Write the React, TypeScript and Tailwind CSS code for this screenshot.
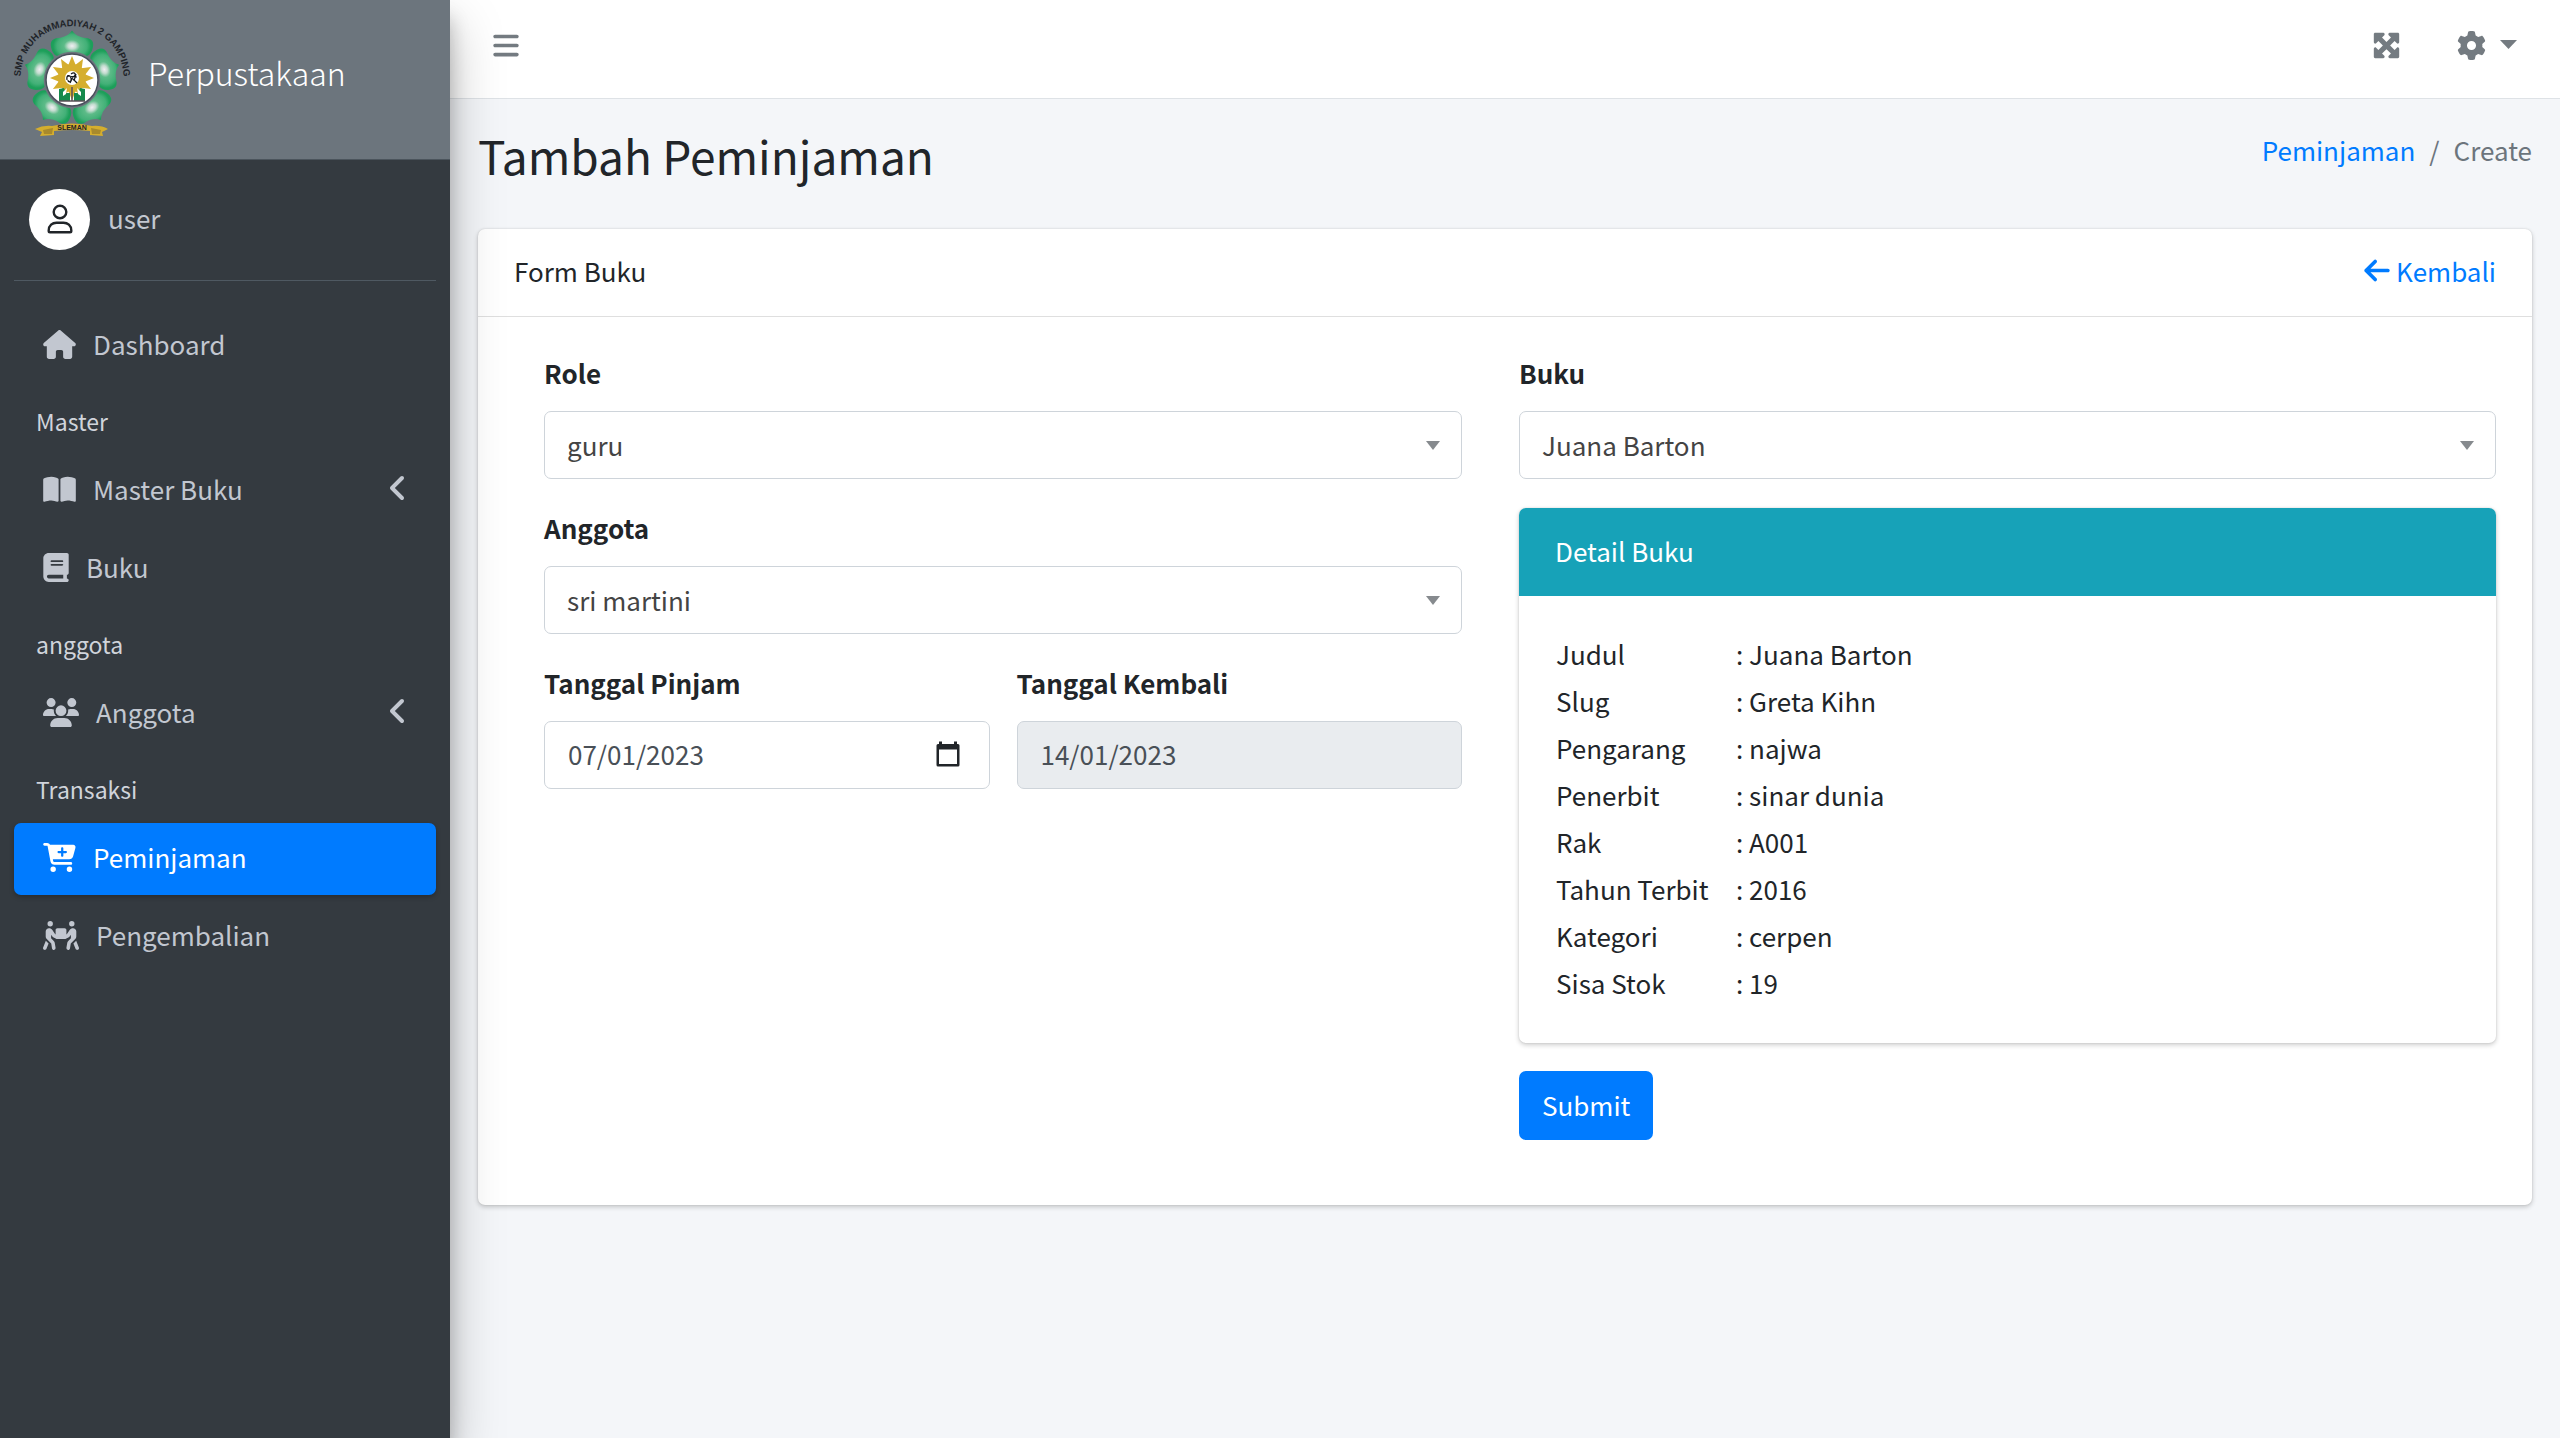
import type { ReactNode } from "react";
import {
  FaAngleLeft,
  FaArrowLeft,
  FaBars,
  FaBook,
  FaBookOpen,
  FaCartPlus,
  FaGear,
  FaHouse,
  FaMaximize,
  FaPeopleCarryBox,
  FaUsers,
} from "react-icons/fa6";

const PETAL_ANGLES = [0, 72, 144, 216, 288];
const RAY_ANGLES = [0, 30, 60, 90, 120, 150, 180, 210, 240, 270, 300, 330];

function SchoolLogo() {
  return (
    <svg viewBox="0 0 118 120" className="h-[120px] w-[118px] shrink-0 overflow-visible" role="img" aria-label="SMP Muhammadiyah 2 Gamping">
      <defs>
        <radialGradient id="petal" gradientUnits="userSpaceOnUse" cx="0" cy="-34" r="20" gradientTransform="translate(0 -8.5) scale(1 0.75)">
          <stop offset="0" stopColor="#f1eff3" />
          <stop offset="0.2" stopColor="#c3dccf" />
          <stop offset="0.4" stopColor="#5dbb88" />
          <stop offset="0.75" stopColor="#42b077" />
          <stop offset="0.95" stopColor="#1d9f5a" />
        </radialGradient>
        <path id="arc" d="M9 72 A51.500 51.500 0 1 1 109 72" />
      </defs>
      <text fontFamily="Liberation Sans, Arial, sans-serif" fontWeight="700" fontSize="9.500" fill="#1f2429" textAnchor="middle">
        <textPath href="#arc" startOffset="50%">
          SMP MUHAMMADIYAH 2 GAMPING
        </textPath>
      </text>
      <g transform="translate(59 62)">
        {PETAL_ANGLES.map((a) => (
          <path
            key={a}
            transform={`rotate(${a})`}
            d="M0 -49.500 C3 -45 8 -42.500 14 -42 C20 -41.500 22 -38 21 -33 C20 -28 18 -25 15 -24 A29 29 0 0 0 -15 -24 C-18 -25 -20 -28 -21 -33 C-22 -38 -20 -41.500 -14 -42 C-8 -42.500 -3 -45 0 -49.500Z"
            fill="url(#petal)"
          />
        ))}
        <circle r="26" fill="#fff" stroke="#4a4f5c" strokeWidth="1.500" />
        {RAY_ANGLES.map((a) => (
          <path key={a} transform={`translate(0 -2) rotate(${a})`} d="M0 -22 L4.500 -11 L-4.500 -11Z" fill="#d5ae2e" />
        ))}
        <circle cy="-2" r="14" fill="#d5ae2e" />
        <circle cy="-2" r="7" fill="#fff" />
        <path d="M-5 0 C-6 -5 -2 -6 -1 -2 C0 2 -4 3 -4 0 M-1 -6 C3 -9 5 -5 1 -3 L-2 3 M1 -1 L5 3 M4 -6 L2 1 M-5 -4 L5 -3" fill="none" stroke="#15181c" strokeWidth="1.200" />
        <path d="M-13 21 V9 L-8 8 L-6 13 L-2 13 V21Z M13 21 V9 L8 8 L6 13 L2 13 V21Z" fill="#158a4c" />
        <path d="M-9 12 L-5 8 L-6 14 L-9 16Z M9 12 L5 8 L6 14 L9 16Z" fill="#fff" />
        <path d="M0 7 V21 M-13 21 H13" stroke="#5a4f57" strokeWidth="1.500" />
      </g>
      <path d="M22 111 Q30 107 39 108 Q59 103 79 108 Q88 107 95 111 L89 114 L90 118 L77 117 V113 Q59 111 41 113 V117 L27 118 L29 114Z" fill="#d5ae2e" />
      <path d="M30 112 L40 110 L39 116 L31 116Z M88 112 L78 110 L79 116 L87 116Z" fill="#a98a2c" />
      <text x="59" y="112" fontFamily="Liberation Sans, Arial, sans-serif" fontWeight="700" fontSize="7" fill="#1f2429" textAnchor="middle">
        SLEMAN
      </text>
    </svg>
  );
}

function NavItem({ icon, label, active, expandable }: { icon: ReactNode; label: string; active?: boolean; expandable?: boolean }) {
  return (
    <a
      href="#"
      aria-current={active ? "page" : undefined}
      className={
        active
          ? "mb-1.5 flex h-[72px] items-center rounded-[7px] bg-[#007bff] px-[29px] text-white shadow-[0_2px_5px_rgba(0,0,0,0.25)]"
          : "mb-1.5 flex h-[72px] items-center rounded-[7px] px-[29px] text-[#c2c7d0]"
      }
    >
      <span className="mr-[17px] pb-1 text-[29px]">{icon}</span>
      <span className="flex-1 pb-1.5">{label}</span>
      {expandable && <FaAngleLeft className="-mr-[7px] mb-1.5 text-[32px]" />}
    </a>
  );
}

function NavHeader({ children }: { children: ReactNode }) {
  return <div className="flex h-[67px] items-center px-[22px] text-[23px] text-[#d0d4db]">{children}</div>;
}

function Field({ id, label, children }: { id: string; label: string; children: ReactNode }) {
  return (
    <div className="flex min-w-0 flex-col gap-[17px]">
      <label htmlFor={id} className="font-bold">
        {label}
      </label>
      {children}
    </div>
  );
}

function Select({ id, options }: { id: string; options: string[] }) {
  return (
    <div className="relative">
      <select
        id={id}
        defaultValue={options[0]}
        className="h-[68px] w-full appearance-none rounded-[7px] border border-[#ced4da] bg-white px-[22px] pb-0.5 text-[#444]"
      >
        {options.map((o) => (
          <option key={o}>{o}</option>
        ))}
      </select>
      <svg viewBox="0 0 14 9" className="pointer-events-none absolute top-[30px] right-[22px] h-[9px] w-[14px]" aria-hidden="true">
        <path d="M0 0H14L7 9Z" fill="#868a8e" />
      </svg>
    </div>
  );
}

const DETAILS: [string, string][] = [
  ["Judul", "Juana Barton"],
  ["Slug", "Greta Kihn"],
  ["Pengarang", "najwa"],
  ["Penerbit", "sinar dunia"],
  ["Rak", "A001"],
  ["Tahun Terbit", "2016"],
  ["Kategori", "cerpen"],
  ["Sisa Stok", "19"],
];

function Sidebar() {
  return (
    <aside className="relative z-10 w-[450px] shrink-0 bg-[#343a40] shadow-[0_25px_50px_rgba(0,0,0,0.25),0_18px_18px_rgba(0,0,0,0.22)]">
      <a href="#" className="flex h-40 items-center border-b border-[#4b545c] bg-[#6c757d] pb-1 pl-[13px] text-[32px] font-light text-white">
        <SchoolLogo />
        <span className="ml-[17px] pb-2.5">Perpustakaan</span>
      </a>
      <div className="mx-3.5 flex h-[121px] items-center border-b border-[#4f5962] pb-0.5 pl-[15px]">
        <span className="mr-[18px] flex size-[61px] items-center justify-center rounded-full bg-white">
          <svg viewBox="0 0 26 30" className="h-[30px] w-[26px]" fill="none" stroke="#212529" strokeWidth="2.400" aria-hidden="true">
            <circle cx="13" cy="8" r="6.300" />
            <path d="M1.700 26.500 C1.700 21.500 5.500 18.700 9.500 18.700 H16.500 C20.500 18.700 24.300 21.500 24.300 26.500 V27 Q24.300 28.300 23 28.300 H3 Q1.700 28.300 1.700 27Z" />
          </svg>
        </span>
        <a href="#" className="pb-1 text-[#c2c7d0]">
          user
        </a>
      </div>
      <nav className="px-3.5 pt-[29px]">
        <NavItem icon={<FaHouse className="w-[33px]" />} label="Dashboard" />
        <NavHeader>Master</NavHeader>
        <NavItem icon={<FaBookOpen className="w-[33px]" />} label="Master Buku" expandable />
        <NavItem icon={<FaBook className="w-[26px]" />} label="Buku" />
        <NavHeader>anggota</NavHeader>
        <NavItem icon={<FaUsers className="w-9" />} label="Anggota" expandable />
        <NavHeader>Transaksi</NavHeader>
        <NavItem icon={<FaCartPlus className="w-[33px]" />} label="Peminjaman" active />
        <NavItem icon={<FaPeopleCarryBox className="w-9" />} label="Pengembalian" />
      </nav>
    </aside>
  );
}

export default function App() {
  return (
    <div className="flex min-h-screen bg-[#f4f6f9] font-['Noto_Sans_CJK_SC','Noto_Sans',sans-serif] text-[26px] leading-[43px] text-[#212529]">
      <Sidebar />
      <div className="min-w-0 flex-1">
        <header className="flex h-[99px] items-center justify-between border-b border-[#dee2e6] bg-white pr-[43px] pb-2 pl-[43px] text-[29px] text-[#747b81]">
          <button type="button" aria-label="Menu">
            <FaBars className="w-[26px]" />
          </button>
          <div className="flex items-center">
            <button type="button" aria-label="Layar penuh" className="mr-14">
              <FaMaximize />
            </button>
            <button type="button" aria-label="Pengaturan" className="flex items-center gap-3.5">
              <FaGear />
              <svg viewBox="0 0 17 9" className="mb-0.5 h-[9px] w-[17px]" fill="currentColor" aria-hidden="true">
                <path d="M0 0H17L8.500 9Z" />
              </svg>
            </button>
          </div>
        </header>

        <main className="px-7">
          <div className="flex items-start justify-between pt-[25px] pb-[43px]">
            <h1 className="text-[46px] leading-[62px]">Tambah Peminjaman</h1>
            <nav aria-label="breadcrumb" className="flex gap-3.5 pt-1 text-[#6c757d]">
              <a href="#" className="text-[#007bff]">
                Peminjaman
              </a>
              <span>/</span>
              <span>Create</span>
            </nav>
          </div>

          <section className="rounded-[7px] bg-white shadow-[0_0_2px_rgba(0,0,0,0.13),0_2px_5px_rgba(0,0,0,0.2)]">
            <div className="flex h-[88px] items-center justify-between border-b border-[#dfdfdf] px-9 pb-1">
              <h2>Form Buku</h2>
              <a href="#" className="flex items-center gap-1.5 text-[#007bff]">
                <FaArrowLeft className="w-[26px] text-[29px]" />
                Kembali
              </a>
            </div>

            <form className="grid grid-cols-[918fr_977fr] gap-[57px] pt-[34px] pr-9 pb-[65px] pl-[66px]" onSubmit={(e) => e.preventDefault()}>
              <div className="flex flex-col gap-[27px]">
                <Field id="role" label="Role">
                  <Select id="role" options={["guru"]} />
                </Field>
                <Field id="anggota" label="Anggota">
                  <Select id="anggota" options={["sri martini"]} />
                </Field>
                <div className="grid grid-cols-2 gap-[27px]">
                  <Field id="pinjam" label="Tanggal Pinjam">
                    <div className="relative">
                      <input
                        id="pinjam"
                        type="text"
                        defaultValue="07/01/2023"
                        className="h-[68px] w-full rounded-[7px] border border-[#ced4da] bg-white px-[23px] pb-1 text-[#495057]"
                      />
                      <button type="button" aria-label="Pilih tanggal" className="absolute top-5 right-[30px]">
                        <svg viewBox="0 0 24 26" className="h-[26px] w-6" aria-hidden="true">
                          <path
                            d="M3 0.500H6V3H18V0.500H21V3H22Q23.500 3 23.500 4.500V24Q23.500 25.500 22 25.500H2Q0.500 25.500 0.500 24V4.500Q0.500 3 2 3H3Z M3 8.500V23H21V8.500Z"
                            fill="#212529"
                            fillRule="evenodd"
                          />
                        </svg>
                      </button>
                    </div>
                  </Field>
                  <Field id="kembali" label="Tanggal Kembali">
                    <input
                      id="kembali"
                      type="text"
                      readOnly
                      value="14/01/2023"
                      className="h-[68px] w-full rounded-[7px] border border-[#ced4da] bg-[#e9ecef] px-[23px] pb-1 text-[#495057]"
                    />
                  </Field>
                </div>
              </div>

              <div className="flex flex-col items-stretch">
                <Field id="buku" label="Buku">
                  <Select id="buku" options={["Juana Barton"]} />
                </Field>
                <div className="mt-[29px] rounded-[7px] bg-white shadow-[0_0_2px_rgba(0,0,0,0.13),0_2px_5px_rgba(0,0,0,0.2)]">
                  <h3 className="flex h-[88px] items-center rounded-t-[7px] bg-[#17a2b8] px-9 pb-1 text-white">Detail Buku</h3>
                  <div className="px-[37px] pt-[34px] pb-[37px]">
                    <table>
                      <tbody>
                        {DETAILS.map(([name, value]) => (
                          <tr key={name} className="h-[47px]">
                            <th scope="row" className="w-[180px] text-left font-normal">
                              {name}
                            </th>
                            <td>: {value}</td>
                          </tr>
                        ))}
                      </tbody>
                    </table>
                  </div>
                </div>
                <button type="submit" className="mt-7 h-[69px] self-start rounded-[7px] bg-[#007bff] px-[23px] pb-0.5 text-white">
                  Submit
                </button>
              </div>
            </form>
          </section>
        </main>
      </div>
    </div>
  );
}
